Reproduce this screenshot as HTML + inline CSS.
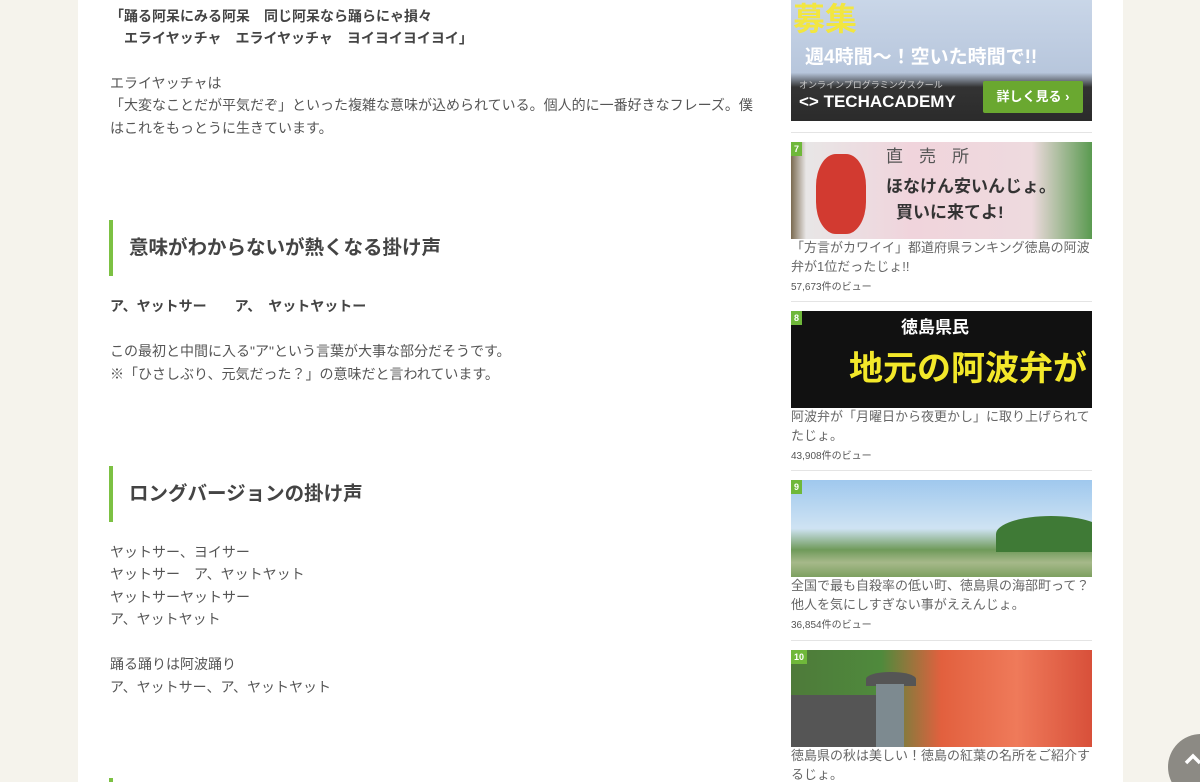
<!DOCTYPE html>
<html><head><meta charset="utf-8">
<style>
*{margin:0;padding:0;box-sizing:border-box}
html{overflow:hidden;width:1200px;height:782px}
body{width:1200px;height:782px;overflow:hidden;background:#f5f3ec;font-family:"Liberation Sans","Noto Sans CJK JP",sans-serif;color:#555;position:relative}
.main{position:absolute;left:78px;top:0;width:1045px;height:782px;background:#fff}
.t{position:absolute;left:110px;font-size:14px;line-height:22.5px;white-space:nowrap}
.b{font-weight:bold;color:#444}
.h{position:absolute;left:109px;width:660px;height:56px;border-left:4px solid #7cc143;padding-left:16px;font-size:19.5px;font-weight:bold;color:#444;line-height:56px;white-space:nowrap}
.img{position:absolute;left:791px;width:301px;overflow:hidden}
.num{position:absolute;left:0;top:0;background:#6fb83a;color:#fff;font-size:9px;font-weight:bold;padding:1px 3px;line-height:12px}
.hr{position:absolute;left:791px;width:301px;height:1px;background:#e4e4e4}
.ttl{position:absolute;left:791px;width:301px;font-size:13px;line-height:19px;color:#666}
.v{position:absolute;left:791px;font-size:10px;color:#555}
</style></head><body>
<div class="main"></div>
<div class="t b" style="top:5px">「踊る阿呆にみる阿呆　同じ阿呆なら踊らにゃ損々</div>
<div class="t b" style="top:27px">　エライヤッチャ　エライヤッチャ　ヨイヨイヨイヨイ」</div>
<div class="t" style="top:72px">エライヤッチャは</div>
<div class="t" style="top:94px">「大変なことだが平気だぞ」といった複雑な意味が込められている。個人的に一番好きなフレーズ。僕</div>
<div class="t" style="top:117px">はこれをもっとうに生きています。</div>
<div class="h" style="top:220px">意味がわからないが熱くなる掛け声</div>
<div class="t b" style="top:295px">ア、ヤットサー　　ア、　ヤットヤットー</div>
<div class="t" style="top:340px">この最初と中間に入る"ア"という言葉が大事な部分だそうです。</div>
<div class="t" style="top:363px">※「ひさしぶり、元気だった？」の意味だと言われています。</div>
<div class="h" style="top:466px">ロングバージョンの掛け声</div>
<div class="t" style="top:541px">ヤットサー、ヨイサー</div>
<div class="t" style="top:563px">ヤットサー　ア、ヤットヤット</div>
<div class="t" style="top:586px">ヤットサーヤットサー</div>
<div class="t" style="top:608px">ア、ヤットヤット</div>
<div class="t" style="top:653px">踊る踊りは阿波踊り</div>
<div class="t" style="top:676px">ア、ヤットサー、ア、ヤットヤット</div>
<div style="position:absolute;left:109px;top:778px;width:4px;height:4px;background:#7cc143"></div>

<div class="img" style="top:0;height:121px;background:linear-gradient(#c9d6e8,#b7c6dc 60%,#333 72%,#2b2b2b)">
 <div style="position:absolute;left:2px;top:-6px;font-size:32px;font-weight:bold;color:#f2e640">募集</div>
 <div style="position:absolute;left:14px;top:42px;font-size:19px;font-weight:bold;color:#fff">週4時間〜！空いた時間で!!</div>
 <div style="position:absolute;left:8px;top:78px;font-size:9px;color:#ccc">オンラインプログラミングスクール</div>
 <div style="position:absolute;left:8px;top:92px;font-size:17px;color:#fff;font-weight:bold">&lt;&gt; TECHACADEMY</div>
 <div style="position:absolute;left:192px;top:81px;width:100px;height:32px;background:#6aa830;color:#fff;font-size:13px;font-weight:bold;line-height:32px;text-align:center;border-radius:2px">詳しく見る ›</div>
</div>
<div class="hr" style="top:132px"></div>
<div class="img" style="top:142px;height:97px;background:linear-gradient(90deg,#7a6a50 0,#e8e6e6 5%,#f0d4dc 40%,#eedade 80%,#5a9a50 100%)">
 <div style="position:absolute;left:95px;top:0;font-size:17px;color:#555;letter-spacing:16px">直売所</div>
 <div style="position:absolute;left:95px;top:30px;font-size:17px;font-weight:bold;color:#333">ほなけん安いんじょ。</div>
 <div style="position:absolute;left:105px;top:56px;font-size:17px;font-weight:bold;color:#333">買いに来てよ!</div>
 <div style="position:absolute;left:25px;top:12px;width:50px;height:80px;background:#d23a30;border-radius:40%"></div>
 <div class="num">7</div></div>
<div class="ttl" style="top:238px">「方言がカワイイ」都道府県ランキング徳島の阿波弁が1位だったじょ!!</div>
<div class="v" style="top:278px">57,673件のビュー</div>
<div class="hr" style="top:301px"></div>
<div class="img" style="top:311px;height:97px;background:#111">
 <div style="position:absolute;left:110px;top:2px;font-size:17px;font-weight:bold;color:#fff">徳島県民</div>
 <div style="position:absolute;left:58px;top:30px;font-size:34px;font-weight:bold;color:#f3e82a;white-space:nowrap">地元の阿波弁が</div>
 <div class="num">8</div></div>
<div class="ttl" style="top:407px">阿波弁が「月曜日から夜更かし」に取り上げられてたじょ。</div>
<div class="v" style="top:447px">43,908件のビュー</div>
<div class="hr" style="top:470px"></div>
<div class="img" style="top:480px;height:97px;background:linear-gradient(#9fc8ee,#cfe3f3 50%,#6f9a5a 72%,#a6b98a 85%,#7da060)">
 <div style="position:absolute;left:205px;top:36px;width:110px;height:36px;background:#3f7a36;border-radius:50% 50% 0 0"></div>
 <div class="num">9</div></div>
<div class="ttl" style="top:576px">全国で最も自殺率の低い町、徳島県の海部町って？他人を気にしすぎない事がええんじょ。</div>
<div class="v" style="top:616px">36,854件のビュー</div>
<div class="hr" style="top:640px"></div>
<div class="img" style="top:650px;height:97px;background:linear-gradient(90deg,#4e7a3a,#4f8a3c 30%,#e2603e 50%,#ef7a5a 75%,#d8503a)">
 <div style="position:absolute;left:0;top:45px;width:100px;height:52px;background:#555"></div>
 <div style="position:absolute;left:75px;top:22px;width:50px;height:14px;background:#555;border-radius:50% 50% 0 0"></div>
 <div style="position:absolute;left:85px;top:34px;width:28px;height:63px;background:#7d8a90"></div>
 <div class="num">10</div></div>
<div class="ttl" style="top:746px">徳島県の秋は美しい！徳島の紅葉の名所をご紹介するじょ。</div>
<div style="position:absolute;left:1168px;top:734px;width:32px;height:48px;overflow:hidden">
 <div style="width:66px;height:66px;border-radius:50%;background:#8c8a84"></div>
</div>
<svg style="position:absolute;left:1183px;top:752px" width="17" height="14"><path d="M3 11 L10 4 L17 11" stroke="#fff" stroke-width="3.5" fill="none"/></svg>
</body></html>
